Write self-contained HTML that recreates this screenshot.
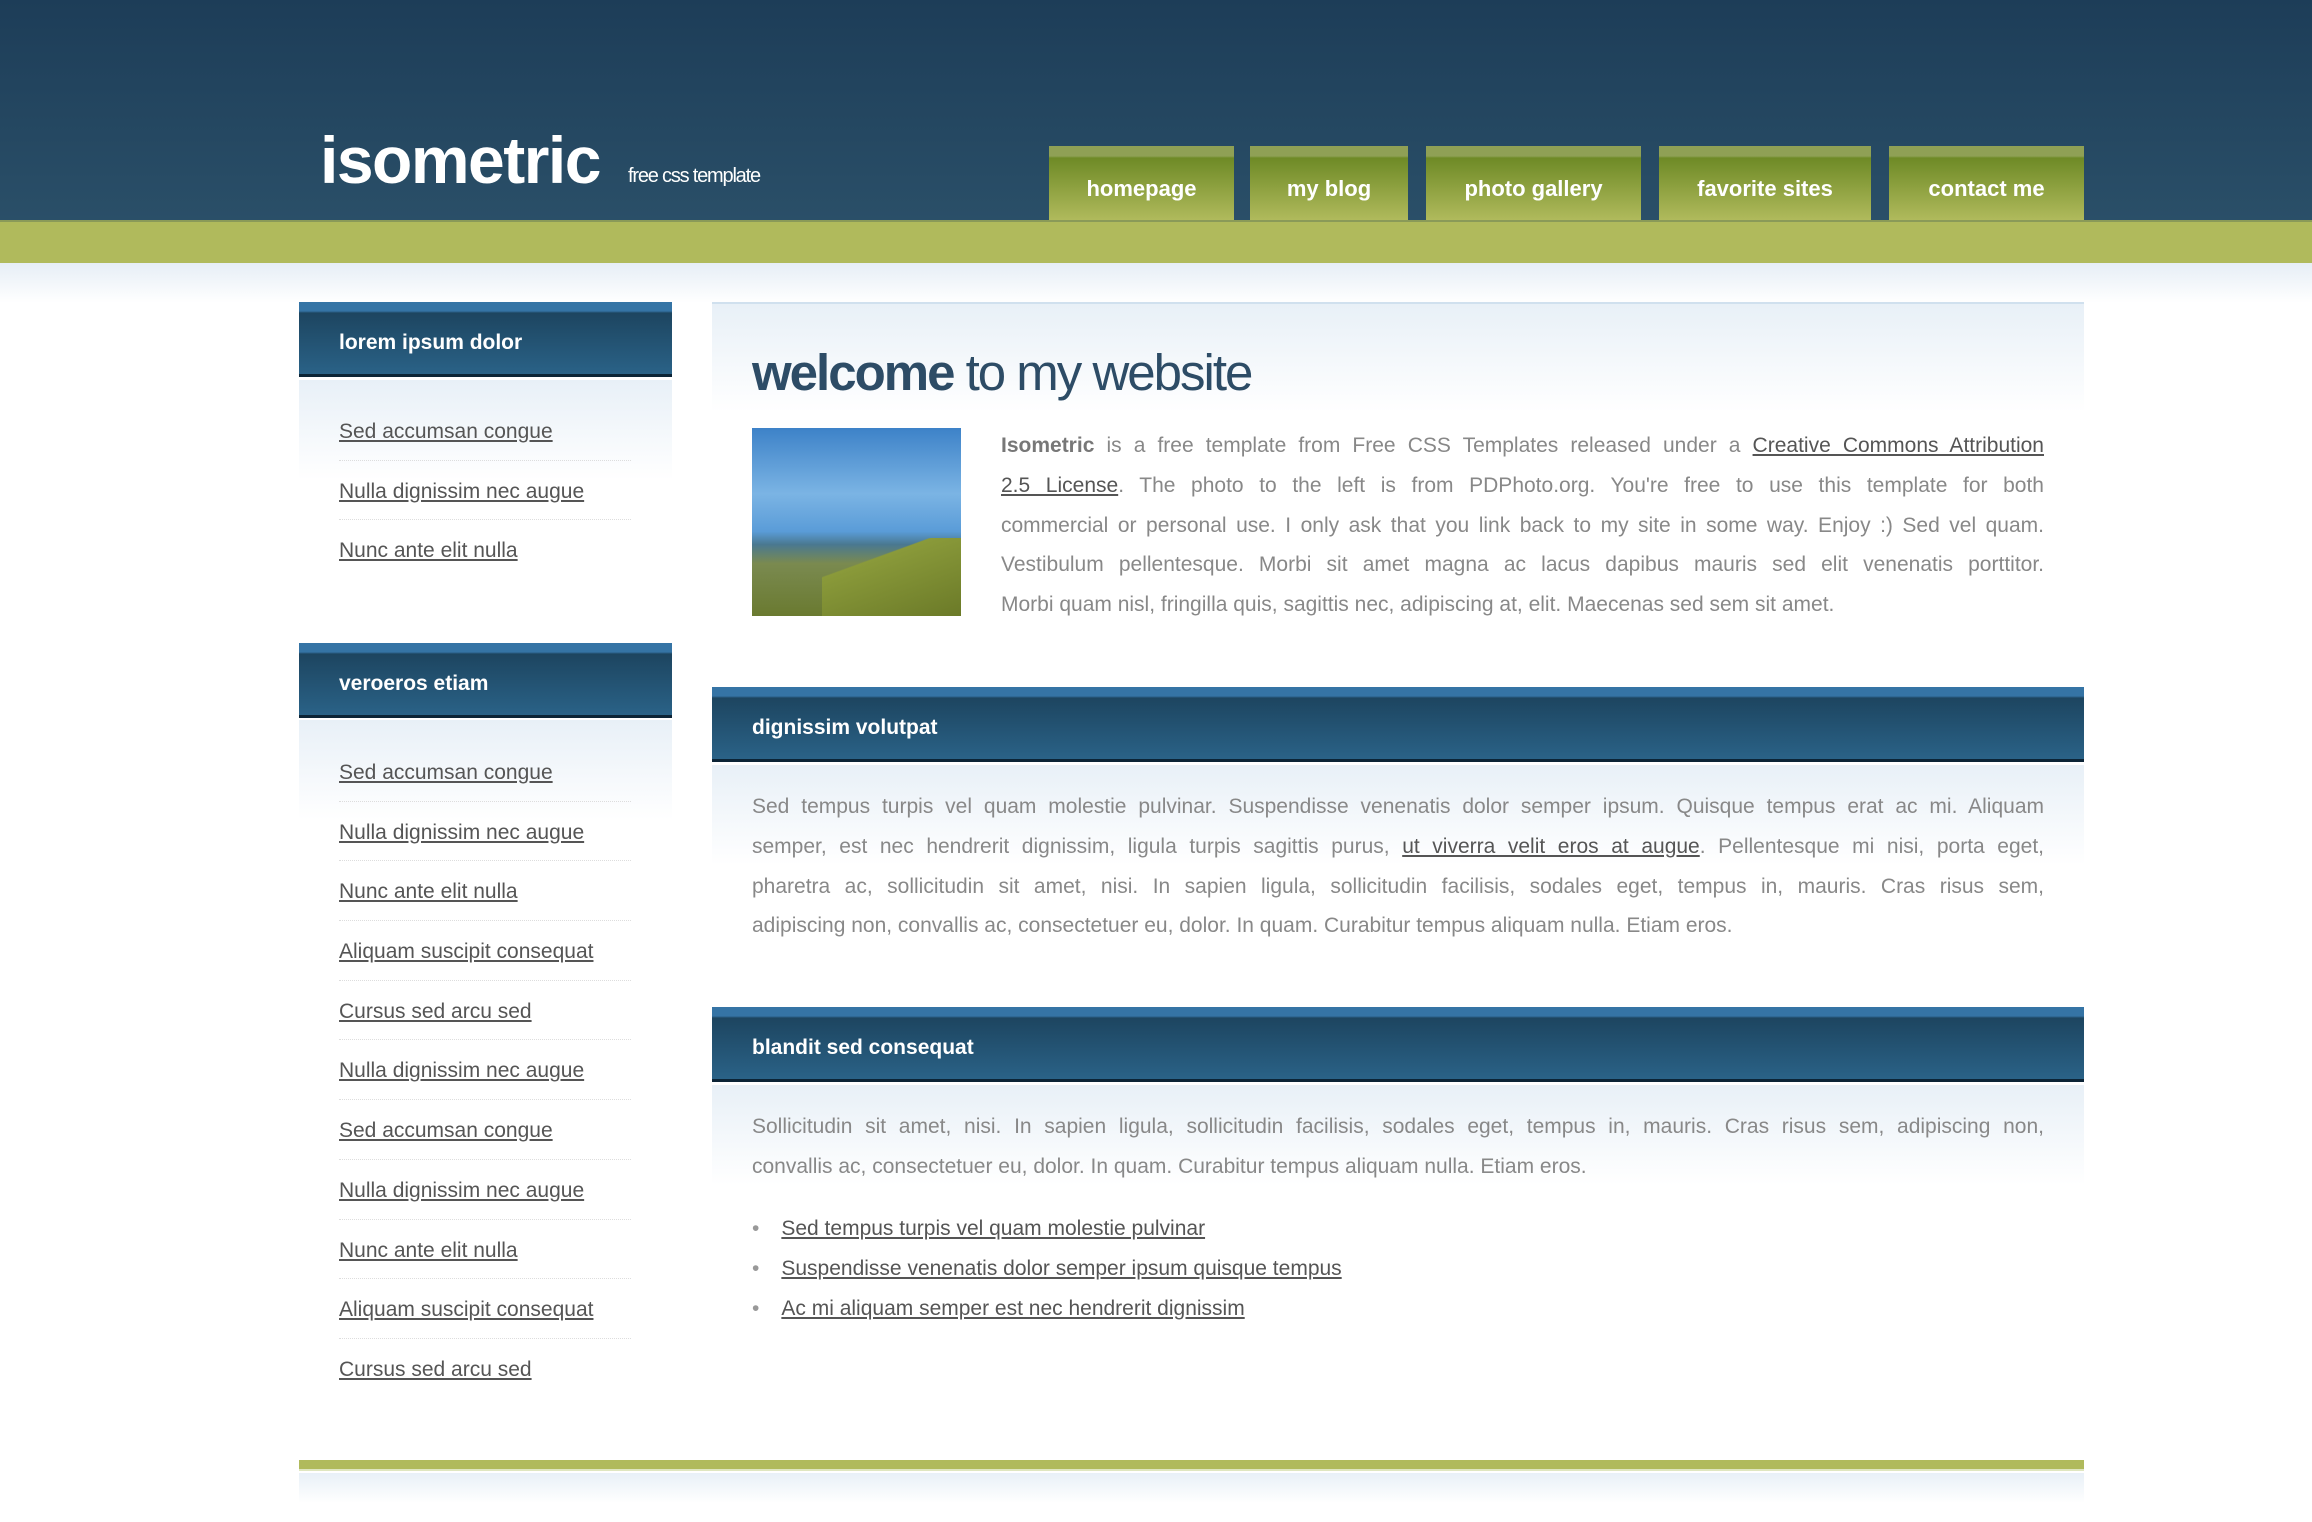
<!DOCTYPE html>
<html><head><meta charset="utf-8">
<style>
*{margin:0;padding:0;box-sizing:border-box}
body{width:2312px;height:1522px;overflow:hidden;background:#fff;font-family:"Liberation Sans","DejaVu Sans",sans-serif;position:relative}
.abs{position:absolute}
#hdr{left:0;top:0;width:2312px;height:220px;background:linear-gradient(#1d3d58,#2a4f68)}
#green{left:0;top:220px;width:2312px;height:43px;background:#b0ba5c;border-top:2px solid #8a9a58}
#fade{left:0;top:263px;width:2312px;height:40px;background:linear-gradient(#e6eef6,#fff)}
#logo{left:320px;top:122px;color:#fff;font-size:66px;font-weight:bold;letter-spacing:-1.5px}
#tag{left:628px;top:165px;color:#fff;font-size:20px;letter-spacing:-1.2px}
.tab{position:absolute;top:146px;height:74px;background:linear-gradient(#8fa055 0,#8fa055 10px,#6e8a26 12px,#b0ba5c 100%);color:#fff;font-weight:bold;font-size:22px;text-align:center;line-height:86px}
.bh{position:absolute;height:75px;background:linear-gradient(#3574a5 0,#3574a5 9px,#1d4560 11px,#2a6287 72px,#0c2436 72px);color:#fff;font-weight:bold;font-size:21px;padding-left:40px;line-height:82px}
.sb a{display:block;color:#555;font-size:21px;text-decoration:underline;height:59.7px;line-height:61px;border-bottom:1px dotted #ddd;width:292px}
.sbl{position:absolute;left:339px}
.sbg{position:absolute;left:299px;width:373px;height:100px;background:linear-gradient(#e8f0f7,#fff)}
.p{color:#888;font-size:21px;line-height:39.8px}
.p div{text-align:justify;text-align-last:justify;white-space:nowrap;overflow:visible}
.p div.l{text-align-last:left}
.p a{color:#555;text-decoration:underline}
.p b{color:#777}
</style></head><body>
<div id="hdr" class="abs"></div>
<div id="green" class="abs"></div>
<div id="fade" class="abs"></div>
<div id="logo" class="abs">isometric</div>
<div id="tag" class="abs">free css template</div>
<div class="tab" style="left:1049px;width:185px">homepage</div>
<div class="tab" style="left:1250px;width:158px">my blog</div>
<div class="tab" style="left:1426px;width:215px">photo gallery</div>
<div class="tab" style="left:1659px;width:212px">favorite sites</div>
<div class="tab" style="left:1889px;width:195px">contact me</div>

<div class="sbg" style="top:380px"></div>
<div class="bh" style="left:299px;top:302px;width:373px">lorem ipsum dolor</div>
<div class="sb sbl" style="top:401px">
<a>Sed accumsan congue</a><a>Nulla dignissim nec augue</a><a style="border:none">Nunc ante elit nulla</a>
</div>
<div class="sbg" style="top:720px"></div>
<div class="bh" style="left:299px;top:643px;width:373px">veroeros etiam</div>
<div class="sb sbl" style="top:742px">
<a>Sed accumsan congue</a><a>Nulla dignissim nec augue</a><a>Nunc ante elit nulla</a><a>Aliquam suscipit consequat</a><a>Cursus sed arcu sed</a><a>Nulla dignissim nec augue</a><a>Sed accumsan congue</a><a>Nulla dignissim nec augue</a><a>Nunc ante elit nulla</a><a>Aliquam suscipit consequat</a><a style="border:none">Cursus sed arcu sed</a>
</div>

<div class="abs" style="left:712px;top:302px;width:1372px;height:110px;border-top:2px solid #d0e0ee;background:linear-gradient(#e8f0f7,#fff)"></div>
<div class="abs" style="left:752px;top:343px;font-size:51px;color:#2d4c66;letter-spacing:-2px"><b>welcome</b> to my website</div>
<div class="abs" style="left:752px;top:428px;width:209px;height:188px;background:linear-gradient(#3d82c8 0%,#7bb4e4 35%,#5a9cd8 55%,#4a7890 62%,#7a8a50 72%,#6a7a30 100%)">
<div style="position:absolute;left:70px;top:110px;width:139px;height:78px;background:linear-gradient(160deg,transparent 30%,#8a9a3a 31%,#6b7a28)"></div></div>
<div class="abs p" style="left:1001px;top:426px;width:1043px">
<div><b>Isometric</b> is a free template from Free CSS Templates released under a <a>Creative Commons Attribution</a></div>
<div><a>2.5 License</a>. The photo to the left is from PDPhoto.org. You're free to use this template for both</div>
<div>commercial or personal use. I only ask that you link back to my site in some way. Enjoy :) Sed vel quam.</div>
<div>Vestibulum pellentesque. Morbi sit amet magna ac lacus dapibus mauris sed elit venenatis porttitor.</div>
<div class="l">Morbi quam nisl, fringilla quis, sagittis nec, adipiscing at, elit. Maecenas sed sem sit amet.</div>
</div>

<div class="abs" style="left:712px;top:765px;width:1372px;height:100px;background:linear-gradient(#e8f0f7,#fff)"></div>
<div class="bh" style="left:712px;top:687px;width:1372px">dignissim volutpat</div>
<div class="abs p" style="left:752px;top:787px;width:1292px">
<div>Sed tempus turpis vel quam molestie pulvinar. Suspendisse venenatis dolor semper ipsum. Quisque tempus erat ac mi. Aliquam</div>
<div>semper, est nec hendrerit dignissim, ligula turpis sagittis purus, <a>ut viverra velit eros at augue</a>. Pellentesque mi nisi, porta eget,</div>
<div>pharetra ac, sollicitudin sit amet, nisi. In sapien ligula, sollicitudin facilisis, sodales eget, tempus in, mauris. Cras risus sem,</div>
<div class="l">adipiscing non, convallis ac, consectetuer eu, dolor. In quam. Curabitur tempus aliquam nulla. Etiam eros.</div>
</div>

<div class="abs" style="left:712px;top:1085px;width:1372px;height:100px;background:linear-gradient(#e8f0f7,#fff)"></div>
<div class="bh" style="left:712px;top:1007px;width:1372px">blandit sed consequat</div>
<div class="abs p" style="left:752px;top:1107px;width:1292px">
<div>Sollicitudin sit amet, nisi. In sapien ligula, sollicitudin facilisis, sodales eget, tempus in, mauris. Cras risus sem, adipiscing non,</div>
<div class="l">convallis ac, consectetuer eu, dolor. In quam. Curabitur tempus aliquam nulla. Etiam eros.</div>
</div>
<div class="abs p" style="left:752px;top:1209px">
<div class="l"><span style="color:#999;margin-right:22px">•</span><a>Sed tempus turpis vel quam molestie pulvinar</a></div>
<div class="l"><span style="color:#999;margin-right:22px">•</span><a>Suspendisse venenatis dolor semper ipsum quisque tempus</a></div>
<div class="l"><span style="color:#999;margin-right:22px">•</span><a>Ac mi aliquam semper est nec hendrerit dignissim</a></div>
</div>

<div class="abs" style="left:299px;top:1460px;width:1785px;height:11px;background:#b0ba5c;border-bottom:2px solid #dfe6c0"></div>
<div class="abs" style="left:299px;top:1473px;width:1785px;height:30px;background:linear-gradient(#e8f0f7,#fff)"></div>
</body></html>
